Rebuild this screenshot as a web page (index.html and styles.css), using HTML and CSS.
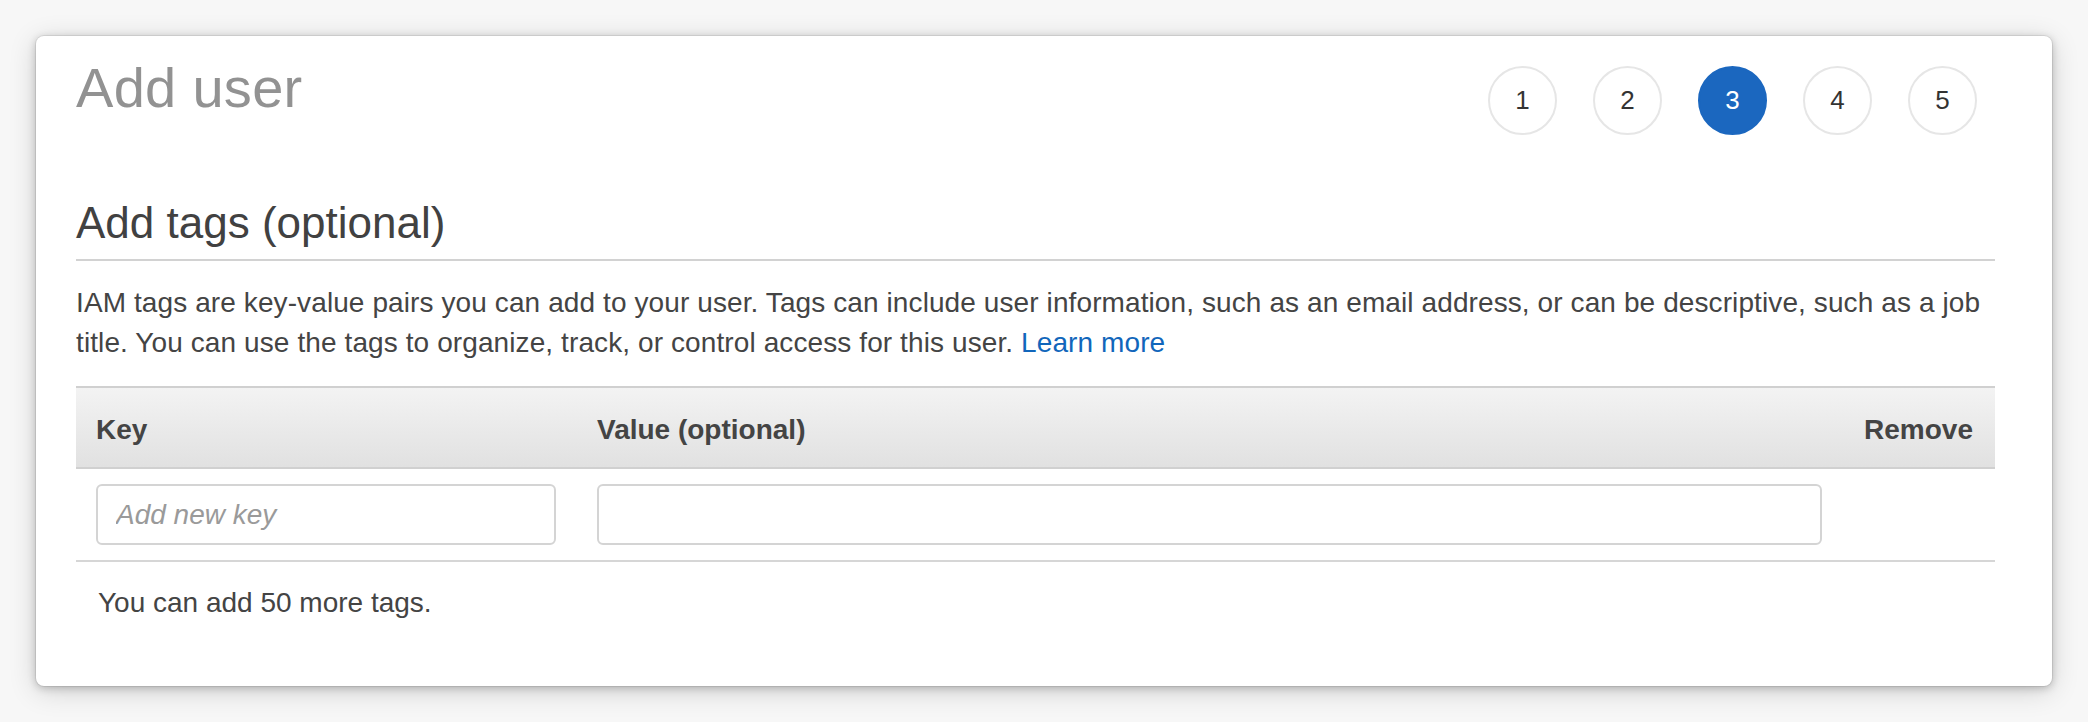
FILE: index.html
```html
<!DOCTYPE html>
<html lang="en">
<head>
<meta charset="utf-8">
<title>Add user</title>
<link rel="stylesheet" href="styles.css">
</head>
<body>
<div class="page">
  <section class="card">
    <header class="card-head">
      <h1 class="title">Add user</h1>
      <ol class="steps">
        <li class="step">1</li>
        <li class="step">2</li>
        <li class="step active">3</li>
        <li class="step">4</li>
        <li class="step">5</li>
      </ol>
    </header>

    <h2 class="section-title">Add tags (optional)</h2>
    <p class="desc">IAM tags are key-value pairs you can add to your user. Tags can include user information, such as an email address, or can be descriptive, such as a job title. You can use the tags to organize, track, or control access for this user. <a class="link" href="#">Learn more</a></p>

    <div class="tags-table">
      <div class="thead">
        <div class="th">Key</div>
        <div class="th">Value (optional)</div>
        <div class="th th-right">Remove</div>
      </div>
      <div class="trow">
        <div class="td"><input class="field" type="text" placeholder="Add new key"></div>
        <div class="td td-value"><input class="field" type="text"></div>
        <div class="td"></div>
      </div>
    </div>

    <p class="note">You can add 50 more tags.</p>
  </section>
</div>
</body>
</html>
```

FILE: styles.css
```css
* { box-sizing: border-box; }

html, body {
  margin: 0;
  padding: 0;
}

body {
  background: #f7f7f7;
  font-family: "Liberation Sans", Arial, Helvetica, sans-serif;
  color: #444;
}

.page {
  padding: 36px;
}

.card {
  width: 2016px;
  height: 650px;
  background: #fff;
  border-radius: 8px;
  box-shadow: 0 0 0 1px rgba(0,0,0,0.07), 0 2px 8px rgba(0,0,0,0.22), 0 5px 28px rgba(0,0,0,0.16);
  padding: 24px 57px 0 40px;
}

.card-head {
  display: flex;
  justify-content: space-between;
  align-items: flex-start;
}

.title {
  margin: 0;
  font-size: 56px;
  line-height: 55px;
  font-weight: normal;
  color: #929292;
  letter-spacing: 0.3px;
}

.steps {
  list-style: none;
  margin: 6px 18px 0 0;
  padding: 0;
  display: flex;
  gap: 36px;
}

.step {
  width: 69px;
  height: 69px;
  border-radius: 50%;
  border: 2px solid #e6e6e6;
  display: flex;
  align-items: center;
  justify-content: center;
  font-size: 26px;
  color: #333;
}

.step.active {
  background: #1b67bf;
  border-color: #1b67bf;
  color: #fff;
}

.section-title {
  margin: 62px 0 0 0;
  font-size: 44px;
  line-height: 52px;
  font-weight: normal;
  color: #414141;
  padding-bottom: 10px;
  border-bottom: 2px solid #d2d2d2;
}

.desc {
  margin: 22px 0 0 0;
  font-size: 28px;
  line-height: 40px;
  color: #444;
  letter-spacing: 0.1px;
}

.link {
  color: #1166bb;
  text-decoration: none;
}

.tags-table {
  margin-top: 23px;
  border-bottom: 2px solid #d6d6d6;
}

.thead, .trow {
  display: grid;
  grid-template-columns: 500px 1fr 152px;
}

.thead {
  height: 83px;
  padding-top: 4px;
  align-items: center;
  border-top: 2px solid #d0d0d0;
  border-bottom: 2px solid #d0d0d0;
  background: linear-gradient(#f3f3f3, #e1e1e1);
}

.th {
  padding: 0 20px;
  font-size: 28px;
  font-weight: bold;
  color: #444;
}

.th + .th {
  padding-left: 21px;
}

.th-right {
  text-align: right;
  padding-right: 22px;
}

.trow {
  padding: 15px 0;
}

.td {
  padding: 0 20px;
}

.td-value {
  padding: 0 21px;
}

.field {
  display: block;
  width: 100%;
  height: 61px;
  border: 2px solid #d4d4d4;
  border-radius: 6px;
  padding: 0 18px;
  font-family: "Liberation Sans", Arial, Helvetica, sans-serif;
  font-size: 28px;
  color: #333;
  background: #fff;
  outline: none;
}

.field::placeholder {
  color: #9a9a9a;
  font-style: italic;
}

.note {
  margin: 21px 0 0 0;
  padding-left: 22px;
  font-size: 28px;
  line-height: 40px;
  color: #444;
}
```
